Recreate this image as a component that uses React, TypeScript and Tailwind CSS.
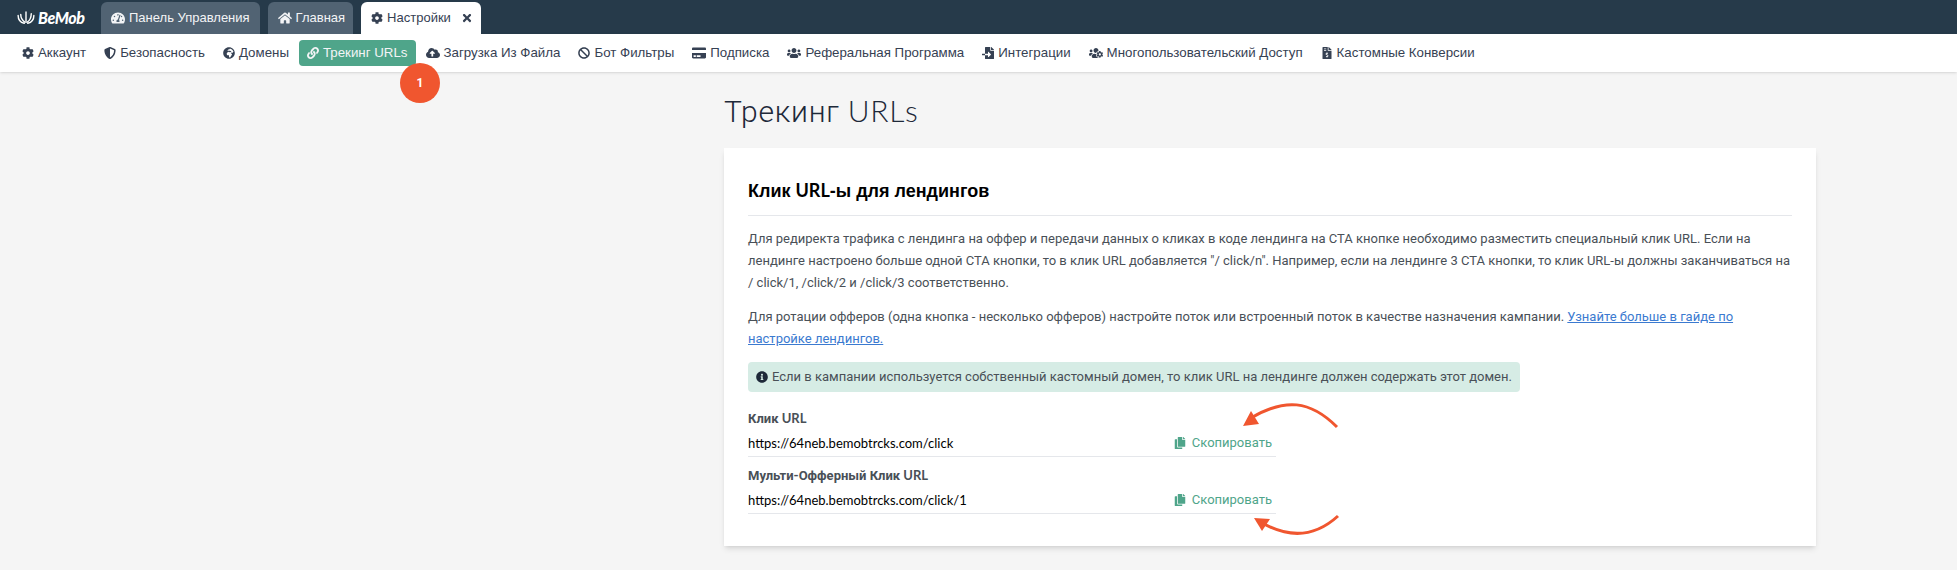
import { FaTachometerAlt, FaHome, FaCog, FaTimes, FaShieldAlt, FaGlobeAfrica, FaLink, FaCloudUploadAlt, FaBan, FaCreditCard, FaUsers, FaFileImport, FaUsersCog, FaFileInvoiceDollar, FaCopy, FaInfoCircle } from "react-icons/fa";

const nav = [
  { icon: FaCog, label: "Аккаунт", size: "size-3" },
  { icon: FaShieldAlt, label: "Безопасность", size: "size-3" },
  { icon: FaGlobeAfrica, label: "Домены", size: "size-3" },
  { icon: FaLink, label: "Трекинг URLs", size: "size-3", active: true },
  { icon: FaCloudUploadAlt, label: "Загрузка Из Файла", size: "size-3.5" },
  { icon: FaBan, label: "Бот Фильтры", size: "size-3" },
  { icon: FaCreditCard, label: "Подписка", size: "size-3.5" },
  { icon: FaUsers, label: "Реферальная Программа", size: "size-3.5" },
  { icon: FaFileImport, label: "Интеграции", size: "size-3" },
  { icon: FaUsersCog, label: "Многопользовательский Доступ", size: "size-3.5" },
  { icon: FaFileInvoiceDollar, label: "Кастомные Конверсии", size: "size-3" },
];

function Lat({ children }: { children: string }) {
  return <span className="font-['Lato',sans-serif]">{children}</span>;
}

function UrlRow({ label, url, className }: { label: string; url: string; className: string }) {
  return (
    <div className={className + " w-132"}>
      <div className="text-[13px] leading-5 font-bold text-[#495057]">
        {label} <Lat>URL</Lat>
      </div>
      <div className="mt-1 flex h-6 items-center justify-between border-b border-gray-200 pr-1 pb-1 text-[13px] text-black">
        <Lat>{url}</Lat>
        <span className="flex items-center gap-1.5 text-[#4fa58a]">
          <FaCopy className="size-3" />
          Скопировать
        </span>
      </div>
    </div>
  );
}

export default function App() {
  return (
    <div className="relative min-h-[570px] overflow-hidden bg-neutral-100 font-['Roboto','Liberation_Sans',sans-serif]">
      <header className="flex items-end gap-2 bg-[#263a4a] pt-0.5 pl-4 font-['Liberation_Sans',sans-serif] text-[13px]">
        <div className="flex h-8 w-[77px] items-center gap-0.5 text-white">
          <svg viewBox="0 0 20 16" className="h-3.5 w-5" fill="none" stroke="white" strokeWidth="1.6" strokeLinecap="round">
            <path d="M1 5c0 5 3 8 7 9" />
            <path d="M4 4c0 4 2 7 5 9" />
            <path d="M19 5c0 5-3 8-7 9" />
            <path d="M16 3c0 4-2 8-5 10" />
            <path d="M10 1v11" />
          </svg>
          <span className="font-['Lato',sans-serif] text-base font-black tracking-tight italic">BeMob</span>
        </div>
        <div className="flex h-8 items-center gap-1 rounded-t-md bg-[#516373] px-2.5 text-gray-100">
          <FaTachometerAlt className="size-3.5" />
          Панель Управления
        </div>
        <div className="flex h-8 items-center gap-1 rounded-t-md bg-[#516373] pr-2 pl-2.5 text-gray-100">
          <FaHome className="size-3.5" />
          Главная
        </div>
        <div className="flex h-8 items-center gap-1 rounded-t-md bg-white pr-2 pl-2.5 text-gray-700">
          <FaCog className="size-3" />
          Настройки
          <FaTimes className="ml-1.5 size-3" />
        </div>
      </header>

      <nav className="flex items-center gap-0.5 bg-white py-1.5 pl-3.5 font-['Liberation_Sans',sans-serif] text-[13.3px] shadow-sm">
        {nav.map(({ icon: Icon, label, active, size }) => (
          <a
            key={label}
            className={
              active
                ? "flex h-6.5 items-center gap-1 rounded bg-[#4fa58a] px-2 text-gray-100"
                : "flex h-6.5 items-center gap-1 rounded px-2 text-gray-700"
            }
          >
            <Icon className={size + " shrink-0"} />
            {label}
          </a>
        ))}
      </nav>

      <div className="absolute top-[63px] left-[400px] flex size-10 items-center justify-center rounded-full bg-[#f0562f] text-xs font-bold text-white">
        1
      </div>

      <main className="ml-[724px] w-[1092px] pt-4.5">
        <h1 className="text-3xl leading-10 font-light tracking-wide text-gray-800">
          Трекинг <Lat>URLs</Lat>
        </h1>
        <section className="mt-4 h-[398px] bg-white px-6 pt-7 text-[13px] leading-[22px] text-[#495057] shadow-md">
          <h2 className="font-['Liberation_Sans',sans-serif] text-lg leading-7 font-bold text-black">
            Клик <Lat>URL</Lat>-ы для лендингов
          </h2>
          <hr className="mt-2.5 border-gray-200" />
          <p className="mt-3">
            Для редиректа трафика с лендинга на оффер и передачи данных о кликах в коде лендинга на CTA кнопке необходимо разместить специальный клик URL. Если на лендинге настроено больше одной CTA кнопки, то в клик URL добавляется "/ click/n". Например, если на лендинге 3 CTA кнопки, то клик URL-ы должны заканчиваться на <br />
            / click/1, /click/2 и /click/3 соответственно.
          </p>
          <p className="mt-3">
            Для ротации офферов (одна кнопка - несколько офферов) настройте поток или встроенный поток в качестве назначения кампании.{" "}
            <a className="text-[#3b7ad0] underline">
              Узнайте больше в гайде по <br />
              настройке лендингов.
            </a>
          </p>
          <div className="mt-3 flex h-7.5 w-fit items-center gap-1 rounded bg-[#d6ece5] px-2">
            <FaInfoCircle className="size-3 text-gray-800" />
            Если в кампании используется собственный кастомный домен, то клик URL на лендинге должен содержать этот домен.
          </div>
          <UrlRow className="mt-4" label="Клик" url="https://64neb.bemobtrcks.com/click" />
          <UrlRow className="mt-2" label="Мульти-Офферный Клик" url="https://64neb.bemobtrcks.com/click/1" />
        </section>
      </main>

      <svg className="pointer-events-none absolute top-0 left-0 size-full" viewBox="0 0 1957 570" fill="none">
        <path d="M1337 427C1310 400 1285 398 1251 418" stroke="#f0562f" strokeWidth="3" />
        <path d="M1243 426L1251 411L1259 424Z" fill="#f0562f" />
        <path d="M1338 516C1315 537 1290 538 1264 524" stroke="#f0562f" strokeWidth="3" />
        <path d="M1254 518L1270 519L1262 531Z" fill="#f0562f" />
      </svg>
    </div>
  );
}
